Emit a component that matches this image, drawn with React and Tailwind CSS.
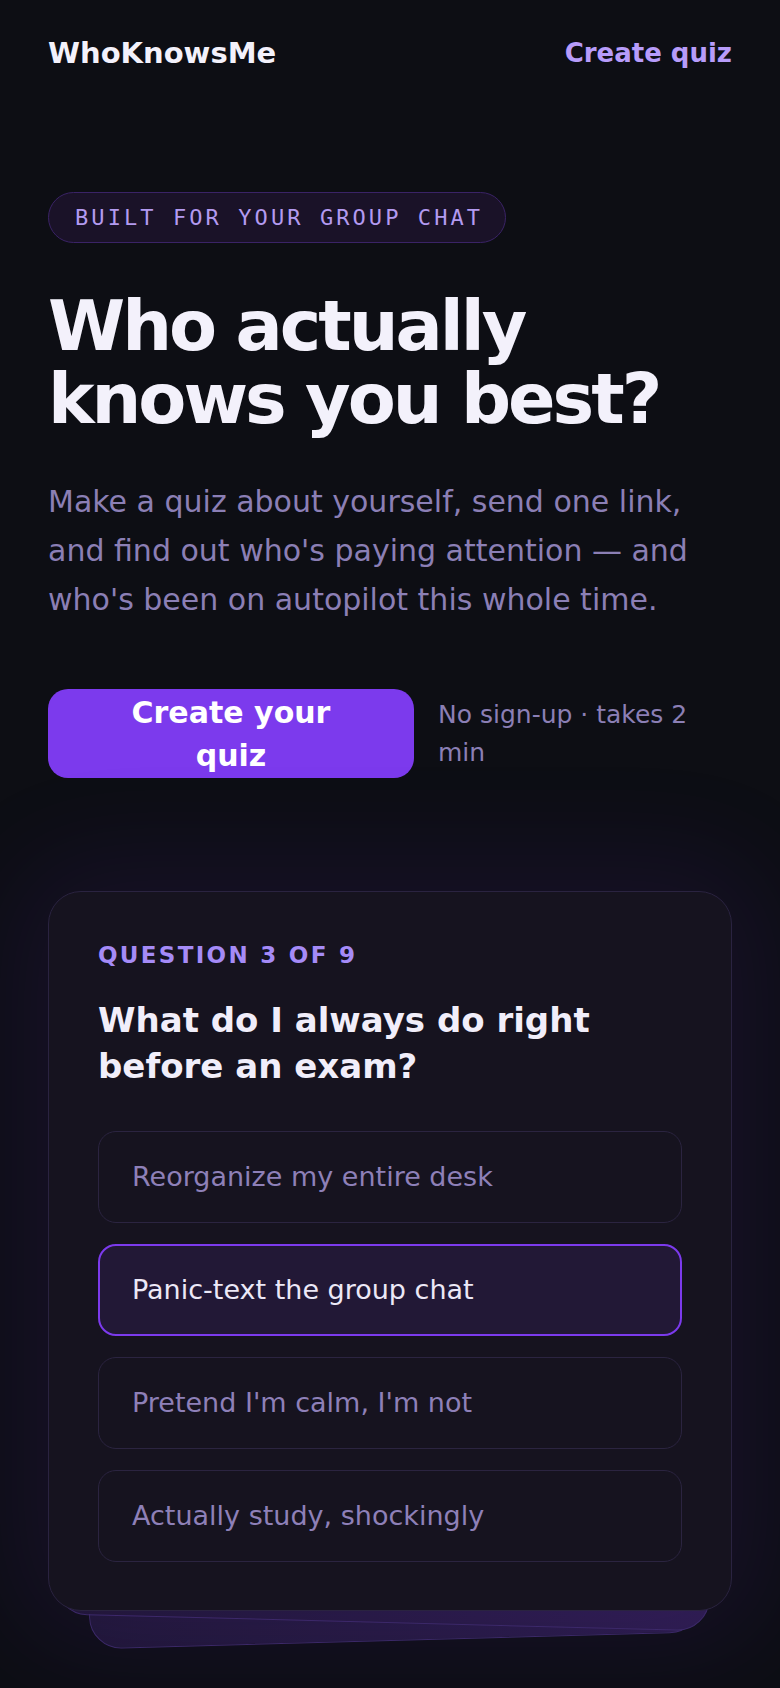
import React from "react";

const options = [
  { label: "Reorganize my entire desk", picked: false },
  { label: "Panic-text the group chat", picked: true },
  { label: "Pretend I'm calm, I'm not", picked: false },
  { label: "Actually study, shockingly", picked: false },
];

export default function App() {
  return (
    <div className="min-h-[1688px] w-full bg-[#0d0e14] overflow-hidden px-12 pt-[36px] pb-[78px] font-['DejaVu_Sans',_sans-serif]">
      {/* header */}
      <header className="flex items-center justify-between">
        <span className="text-[29px] leading-[35px] font-bold text-[#f3f1fb]">WhoKnowsMe</span>
        <a className="text-[26px] leading-[35px] font-bold text-[#b79cfa]">Create quiz</a>
      </header>

      {/* hero */}
      <div className="mt-[121px] inline-flex h-[51px] items-center rounded-full border border-[#3a2366] bg-[#1a1228] pl-[26px] pr-[22px]">
        <span className="font-['DejaVu_Sans_Mono',_monospace] text-[22px] tracking-[0.14em] text-[#b39af0]">
          BUILT FOR YOUR GROUP CHAT
        </span>
      </div>

      <h1 className="mt-[47px] text-[70px] leading-[73px] font-bold tracking-[-0.043em] text-[#f3f1fb]">
        Who actually knows you best?
      </h1>

      <p className="mt-[41px] text-[30px] leading-[49px] text-[#8b7fb5]">
        Make a quiz about yourself, send one link, and find out who's paying attention — and who's been on autopilot this whole time.
      </p>

      <div className="mt-[65px] flex items-center gap-6">
        <button className="flex h-[89px] w-[366px] shrink-0 items-center justify-center rounded-[20px] bg-[#7c3aed] px-14 text-center text-[30px] leading-[43px] font-bold text-white">
          Create your quiz
        </button>
        <p className="text-[25px] leading-[38px] text-[#8b7fb5]">No sign-up · takes 2 min</p>
      </div>

      {/* preview card */}
      <div className="relative mt-[113px]">
        <div className="absolute left-[32px] right-[40px] top-[40px] bottom-[-30px] -rotate-[1.6deg] rounded-[32px] border border-[#3a2a63] bg-gradient-to-r from-[#1e1734] to-[#291b47]" />
        <div className="absolute left-[16px] right-[14px] top-[30px] bottom-[-12px] rotate-[1.5deg] rounded-[32px] border border-[#3a2a63] bg-gradient-to-r from-[#1d1630] to-[#2b1c4b]" />
        <div className="relative rounded-[33px] border border-[#2a2340] bg-[#16131f] px-[49px] pt-[49px] pb-[48px] shadow-[0_0_110px_30px_rgba(109,40,217,0.10)]">
          <div className="text-[23px] leading-[28px] font-bold tracking-[0.1em] text-[#a58bf7]">QUESTION 3 OF 9</div>
          <h2 className="mt-[28px] text-[34px] leading-[46px] font-bold text-[#f1eefa]">
            What do I always do right before an exam?
          </h2>
          <div className="mt-[42px] flex flex-col gap-[21px]">
            {options.map((o) => (
              <div
                key={o.label}
                className={
                  o.picked
                    ? "flex h-[92px] items-center rounded-[18px] border-2 border-[#7c3aed] bg-[#221836] px-[32px] text-[27px] text-[#ece8f7]"
                    : "flex h-[92px] items-center rounded-[18px] border border-[#2b2440] bg-[#16131f] px-[33px] text-[27px] text-[#8e80b8]"
                }
              >
                {o.label}
              </div>
            ))}
          </div>
        </div>
      </div>
    </div>
  );
}
